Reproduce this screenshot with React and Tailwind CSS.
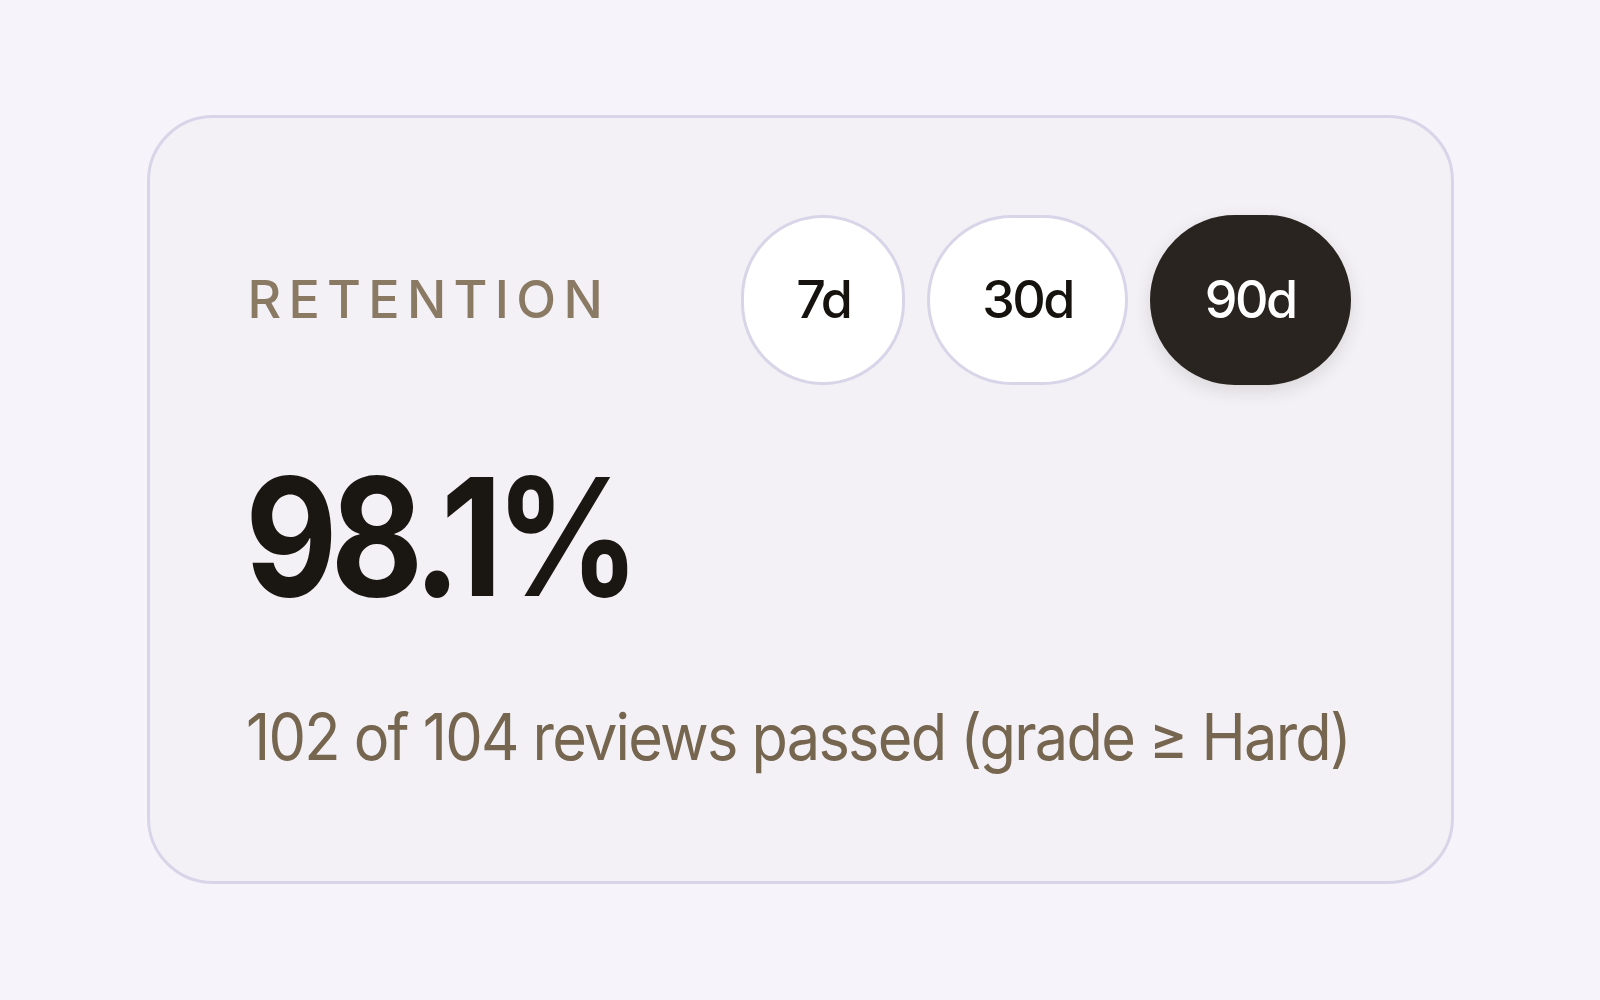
import React, { useState } from 'react';

const ranges = ['7d', '30d', '90d'];

export default function App() {
    const [range, setRange] = useState('90d');

    return (
        <div className="min-h-screen w-full bg-[#f6f4fa] flex items-start justify-center pt-[115px]" style={{ fontFamily: 'Inter, "Noto Sans", sans-serif' }}>
            {/* Carte de rétention */}
            <div className="w-[1307px] h-[769px] rounded-[66px] border-[3px] border-[#d9d5e9] bg-[#f3f1f6] px-[100px] pt-[97px]">
                <div className="flex items-center justify-between">
                    <span className="-ml-[2px] text-[52px] font-medium tracking-[0.14em] text-[#8a7a64] leading-none">RETENTION</span>
                    <div className="flex items-center gap-[22px]">
                        {ranges.map((r) => {
                            const active = r === range;
                            return (
                                <button
                                    key={r}
                                    onClick={() => setRange(r)}
                                    className={`h-[170px] px-[52px] rounded-full text-[52px] font-medium tracking-[-0.05em] leading-none ${active
                                        ? 'bg-[#29241f] text-white border-[3px] border-[#29241f] shadow-[0_6px_18px_rgba(40,30,20,0.12)]'
                                        : 'bg-white text-[#16130f] border-[3px] border-[#d9d5e9]'
                                        }`}
                                >
                                    {r}
                                </button>
                            );
                        })}
                    </div>
                </div>

                <div className="mt-[70px] -ml-[5px] origin-left scale-x-[0.87] text-[164px] font-bold leading-none tracking-[-0.05em] text-[#1a1712]">98.1%</div>

                <p className="mt-[86px] -ml-[4px] origin-left scale-x-[0.93] whitespace-nowrap text-[64px] leading-none tracking-[-0.03em] text-[#76664f]">
                    102 of 104 reviews passed (grade ≥ Hard)
                </p>
            </div>
        </div>
    );
}
